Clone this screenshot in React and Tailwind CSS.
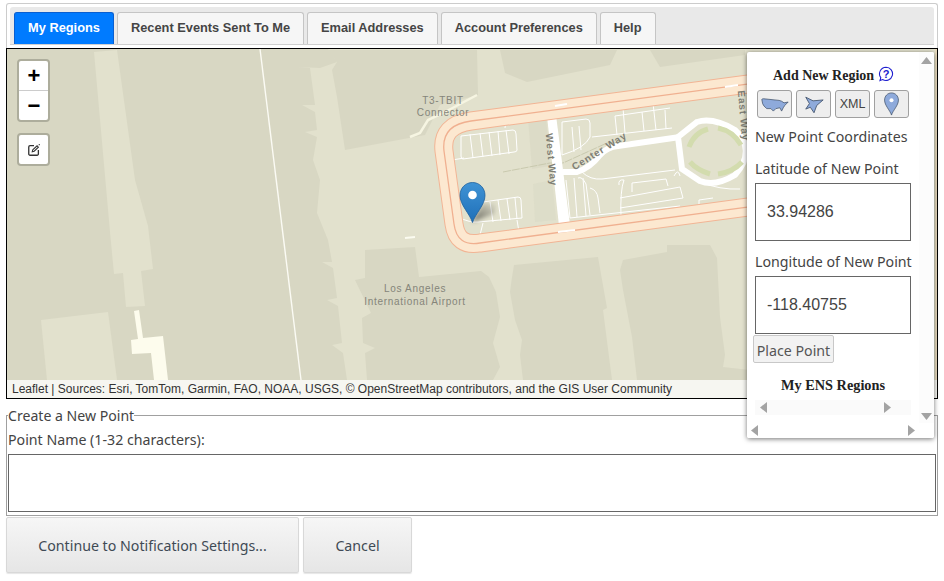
import React from "react";

const DARK = "#d8d7c3";
const LIGHT = "#e2e1cd";

const darkBlocks = [
  "7,49 328,49 337,62 320,68 298,67 310,68 315,105 302,105 315,112 317,130 305,132 317,137 313,160 320,180 317,213 328,240 332,262 322,262 333,268 337,298 327,300 338,306 342,343 332,345 343,353 347,380 7,380",
  "328,50 477,50 478,95 440,105 425,135 345,150 337,97 332,70 337,62",
  "500,50 617,50 610,65 527,82 505,73",
  "650,50 745,50 745,55 660,67",
  "365,250 415,247 419,277 481,271 489,277 496,292 500,317 493,343 500,367 493,380 367,380 365,353 375,348 363,343 362,318 371,313 355,280 365,278",
  "514,265 598,257 607,308 603,310 612,380 523,380 520,355 522,340 515,320 510,292 512,277",
  "623,260 667,252 667,245 710,245 717,258 720,317 723,340 725,355 723,367 750,370 750,380 637,380 632,337 623,290 620,270",
];

const lightBlocks = [
  "94,52 117,50 135,180 148,226 153,269 141,271 145,306 126,307 123,273 114,274 110,232",
  "41,320 108,312 117,380 47,380",
];

const whiteLines = [
  "M461 136 L513 130 Q516 130 516 134 L517 150 Q517 152 514 152 L463 159 Q461 159 461 156 Z",
  "M470 134 L473 158 M480 133 L483 157 M489 132 L492 156 M498 131 L500 155 M506 130 L509 154",
  "M452 160 L464 158 M505 128 L506 120 Q520 120 527 116",
  "M562 122 L586 119 Q590 119 590 123 L590 137 Q585 148 562 155 Z",
  "M572 127 L574 152 M579 126 L581 150",
  "M615 116 L670 108 M615 116 L617 135 M623 108 L625 133 M642 112 L644 131 M653 103 L656 130 M665 110 L666 129 M592 137 L672 128",
  "M566 180 L570 218 M578 178 Q582 176 586 184 L590 215 M590 188 Q597 190 598 198 L600 213 M574 178 L577 217 M583 178 L586 216",
  "M582 172 Q590 180 602 179 L675 170 M619 185 Q618 179 624 180 Q620 190 621 218 M620 198 L680 187 L683 198 L620 208 M632 192 L632 183 L666 179 L668 186 M680 176 Q678 168 674 176",
  "M570 218 L680 206 M700 182 Q720 190 740 189 M699 208 L699 200 L713 198",
  "M458 217 Q470 223 478 222 L522 218 M483 223 L480 235 M517 220 L519 232",
  "M483 202 L518 197 Q521 197 521 200 L522 218 M490 202 L493 222 M498 200 L501 221 M507 199 L510 220 M515 198 L517 219",
];

function Arrow({ dir }) {
  const pts = {
    up: "0,8 5.5,1 11,8",
    down: "0,1 5.5,8 11,1",
    left: "8,0 1,5.5 8,11",
    right: "1,0 8,5.5 1,11",
  }[dir];
  const v = dir === "up" || dir === "down" ? "0 0 11 9" : "0 0 9 11";
  const c = dir === "up" || dir === "down" ? "w-[11px] h-[9px]" : "w-[9px] h-[11px]";
  return (
    <svg viewBox={v} className={c}>
      <polygon points={pts} fill="#a3a3a3" />
    </svg>
  );
}

const RING = "M770 81 L471 121 Q441 125 444 151 L454 224 Q457 247 480 243 L770 204";

function MapArt() {
  return (
    <svg viewBox="7 49 930 349" className="block w-[930px] h-[349px]">
      <defs>
        <linearGradient id="pinGrad" x1="0" y1="0" x2="0" y2="1">
          <stop offset="0" stopColor="#3f93d5" />
          <stop offset="1" stopColor="#1f6fb8" />
        </linearGradient>
        <linearGradient id="shadowGrad" x1="0" y1="1" x2="1" y2="0">
          <stop offset="0" stopColor="#000" stopOpacity="0.55" />
          <stop offset="1" stopColor="#000" stopOpacity="0" />
        </linearGradient>
        <filter id="blurShadow" x="-30%" y="-30%" width="160%" height="160%">
          <feGaussianBlur stdDeviation="2" />
        </filter>
      </defs>
      <rect x="7" y="49" width="930" height="349" fill={LIGHT} />
      {darkBlocks.map((p, i) => (
        <polygon key={i} points={p} fill={DARK} />
      ))}
      {lightBlocks.map((p, i) => (
        <polygon key={i} points={p} fill={LIGHT} />
      ))}
      <line x1="260" y1="49" x2="301" y2="380" stroke="#fbfbf4" strokeWidth="1.4" />
      <polygon points="134,311 139,310 143,338 163,336 168,380 154,380 151,353 132,354 131,340 138,339" fill="#fdfced" />
      <path d="M410 137 L420 133 L428 120 L445 112 L477 95" fill="none" stroke="#f6f5e2" strokeWidth="2.5" />
      <path d="M405 238 L415 237" stroke="#fbfbf0" strokeWidth="2" />

      <polygon points="528,118 546,116 550,166 532,169" fill={DARK} opacity="0.6" />
      <polygon points="533,184 552,180 556,220 535,222" fill={DARK} opacity="0.4" />

      <path d="M503 172 L550 163 L563 163 L607 143 L673 140" fill="none" stroke="#c9c9ae" strokeWidth="1" strokeDasharray="8 1" />

      <g fill="none" stroke="#ffffff" strokeWidth="1">
        {whiteLines.map((d, i) => (
          <path key={i} d={d} />
        ))}
      </g>

      <polygon points="547,116 556,115 570,225 559,226" fill="#fff" />
      <path d="M563 172 L577 172 Q590 168 600 155 Q607 147 618 146 L680 137" fill="none" stroke="#fff" strokeWidth="6" />
      <path d="M678 137 L697 122 Q713 117 735 130 Q757 150 735 175 Q715 187 700 181 L682 169 Z" fill="none" stroke="#fff" strokeWidth="6" />
      <path d="M689 147 Q694 133 708 129 M718 128 Q733 131 741 145" fill="none" stroke="#d3dcae" strokeWidth="5" />
      <path d="M690 162 Q697 170 710 174 M718 174 Q733 172 742 162" fill="none" stroke="#d3dcae" strokeWidth="5" />

      <g fill="none" strokeLinejoin="round">
        <path d={RING} stroke="#f2b494" strokeWidth="19" />
        <path d={RING} stroke="#fce8d0" strokeWidth="17" />
        <path d={RING} stroke="#f0b090" strokeWidth="1.3" />
      </g>
      <path d="M555 106 L567 104 M558 232 L575 230 M725 87 L738 85" stroke="#fff" strokeWidth="2" />

      <polygon points="935,49 938,49 938,398 935,398" fill="#eadcbe" />

      <g fontFamily="'Liberation Sans', sans-serif" fontSize="10" fill="#85857a" letterSpacing="0.7" textAnchor="middle">
        <text x="443" y="104">T3-TBIT</text>
        <text x="443" y="116">Connector</text>
        <text x="415" y="292">Los Angeles</text>
        <text x="415" y="305">International Airport</text>
      </g>
      <g fontFamily="'Liberation Sans', sans-serif" fontSize="10" fontWeight="700" fill="#7f7f75" letterSpacing="0.8" textAnchor="middle">
        <text transform="translate(548 160) rotate(85)">West Way</text>
        <text transform="translate(601 154) rotate(-32)">Center Way</text>
        <text transform="translate(740 116) rotate(85)">East Way</text>
      </g>

      <polygon points="472,222 483,203 497,203 494,214" fill="url(#shadowGrad)" filter="url(#blurShadow)" />
      <path
        d="M472.5 222.5 C470 214 460 205 460 195.5 C460 188 465.5 182.5 472.5 182.5 C479.5 182.5 485 188 485 195.5 C485 205 475 214 472.5 222.5 Z"
        fill="url(#pinGrad)"
        stroke="#1c5f9e"
        strokeWidth="0.8"
      />
      <circle cx="472.5" cy="195" r="4.3" fill="#fff" />
    </svg>
  );
}

const iconBtn =
  "w-[35px] h-[28px] flex items-center justify-center rounded-[3px] border border-[#a0a0a0] bg-[#eeeeee]";

function Panel() {
  return (
    <div className="absolute left-[740px] top-[3px] z-10 w-[187px] h-[386px] bg-white shadow-[0_1px_5px_rgba(0,0,0,0.55)] rounded-[2px] overflow-hidden">
      <div className="absolute right-0 top-0 bottom-[15px] w-[15px] bg-[#fcfcfc] flex flex-col items-center justify-between pt-1 pb-[2px]">
        <Arrow dir="up" />
        <Arrow dir="down" />
      </div>
      <div className="absolute left-0 right-0 bottom-0 h-[15px] bg-white flex items-center justify-between pl-[3px] pr-[18px]">
        <Arrow dir="left" />
        <Arrow dir="right" />
      </div>

      <div className="pl-2 w-[172px]">
        <div className="flex items-center justify-start gap-[4px] pt-[9px] h-[38px] pl-[18px] text-[14px] font-bold font-['Liberation_Serif',serif] text-[#222]">
          <span>Add New Region</span>
          <svg viewBox="0 0 16 16" className="w-[16px] h-[16px] -mt-[4px]">
            <path d="M8 1.2a6.6 6.6 0 1 1-3.4 12.3L2 14.5l.8-2.8A6.6 6.6 0 0 1 8 1.2Z" fill="none" stroke="#2020d0" strokeWidth="1.1" />
            <text x="8" y="11.8" textAnchor="middle" fontSize="11" fontFamily="'Liberation Sans', sans-serif" fill="#2020d0">?</text>
          </svg>
        </div>
        <div className="flex gap-[4px] pl-[2px]">
          <div className={iconBtn}>
            <svg viewBox="0 0 34 20" className="w-[28px] h-[17px]">
              <path d="M1 4 Q1 3 3 3 L22 5 L25 6 L28 8 L33 7 L29 11 L27 14 L25 18 L23 14 L18 15 L15 18 L12 15 L7 15 Q3 12 2 9 Z" fill="#8eaadb" stroke="#3f5069" strokeWidth="0.9" strokeLinejoin="round" />
            </svg>
          </div>
          <div className={iconBtn}>
            <svg viewBox="0 0 24 20" className="w-[22px] h-[19px]">
              <path d="M3 2 L11 6 L22 5 L15 11 L12 19 L8 13 L3 15 L7 9 Z" fill="#8eaadb" stroke="#3f5069" strokeWidth="0.9" strokeLinejoin="round" />
            </svg>
          </div>
          <div className={`${iconBtn} text-[12.5px] font-['Liberation_Sans',sans-serif] text-[#444]`}>XML</div>
          <div className={iconBtn}>
            <svg viewBox="0 0 18 26" className="w-[17px] h-[24px]">
              <path d="M9 25 C7.5 20 1.5 14.5 1.5 8.8 C1.5 4.4 4.8 1 9 1 C13.2 1 16.5 4.4 16.5 8.8 C16.5 14.5 10.5 20 9 25 Z" fill="#8eaadb" stroke="#3f5069" strokeWidth="0.8" />
              <circle cx="9" cy="9" r="2.2" fill="#fff" />
            </svg>
          </div>
        </div>

        <div className="mt-[8px] h-[22px] leading-[22px] text-[14.2px] text-[#444]">New Point Coordinates</div>
        <div className="mt-[10px] h-[22px] leading-[22px] text-[14.2px] text-[#444]">Latitude of New Point</div>
        <div className="mt-[3px] w-[156px] h-[58px] border border-[#666] flex items-center pl-[11px] text-[16px] font-['Liberation_Sans',sans-serif] text-[#444]">33.94286</div>
        <div className="mt-[10px] h-[22px] leading-[22px] text-[14.2px] text-[#444] whitespace-nowrap">Longitude of New Point</div>
        <div className="mt-[3px] w-[156px] h-[58px] border border-[#666] flex items-center pl-[11px] text-[16px] font-['Liberation_Sans',sans-serif] text-[#444]">-118.40755</div>
        <div className="-ml-[2px] mt-[1px] w-[81px] h-[28px] pt-[3px] border border-[#c8c8c8] bg-[#f2f2f2] rounded-[2px] flex items-center justify-center text-[14.2px] text-[#555]">Place Point</div>
        <div className="mt-[13px] w-[156px] text-center text-[14.3px] leading-[18px] font-bold font-['Liberation_Serif',serif] text-[#222]">My ENS Regions</div>
        <div className="mt-[6px] w-[156px] h-[15px] bg-[#fafafa] flex items-center justify-between pl-[4px] pr-[19px]">
          <Arrow dir="left" />
          <Arrow dir="right" />
        </div>
      </div>
    </div>
  );
}

const tabs = ["Recent Events Sent To Me", "Email Addresses", "Account Preferences", "Help"];

export default function App() {
  return (
    <div className="w-[944px] h-[581px] bg-white font-['Noto_Sans',sans-serif] overflow-hidden pt-[3px] pl-[6px]">
      <div className="w-[932px] h-[45px] border border-[#cccccc] border-b-0 rounded-t-[3px] pt-[3px] pl-[3px] pr-[3px]">
        <div className="h-[38px] bg-[#e9e9e9] border-b border-[#d0d0d0] rounded-t-[3px] pt-[5px] pl-[4px] flex gap-[3px]">
          <div className="w-[100px] h-[32px] pb-[2px] bg-[#007bff] border border-[#0a5fd0] border-b-0 rounded-t-[3px] flex items-center justify-center text-[12.8px] font-bold font-['Liberation_Sans',sans-serif] text-white">
            My Regions
          </div>
          {tabs.map((t) => (
            <div
              key={t}
              className="h-[32px] pb-[2px] px-[13px] bg-[#f6f6f6] border border-[#c5c5c5] border-b-0 rounded-t-[3px] flex items-center text-[12.8px] font-bold font-['Liberation_Sans',sans-serif] text-[#454545]"
            >
              {t}
            </div>
          ))}
        </div>
      </div>

      <div className="relative w-[932px] h-[351px] border border-black">
        <MapArt />
        <div className="absolute left-0 right-0 bottom-0 h-[18px] bg-[#f6f6f1] pl-[5px] pb-[1px] flex items-center text-[12px] font-['Liberation_Sans',sans-serif] text-[#333]">
          Leaflet | Sources: Esri, TomTom, Garmin, FAO, NOAA, USGS, © OpenStreetMap contributors, and the GIS User Community
        </div>
        <div className="absolute left-[10px] top-[10px] w-[33px] h-[63px] border-2 border-[#adad9c] rounded-[4px] bg-white flex flex-col font-['Liberation_Sans',sans-serif] font-bold text-black">
          <div className="h-[30px] pl-px border-b border-[#cccccc] flex items-center justify-center text-[22px] leading-none">+</div>
          <div className="h-[29px] pl-px flex items-center justify-center text-[22px] leading-none">−</div>
        </div>
        <div className="absolute left-[10px] top-[84px] w-[33px] h-[33px] pl-px border-2 border-[#adad9c] rounded-[4px] bg-white flex items-center justify-center">
          <svg viewBox="0 0 16 16" className="w-[14px] h-[14px]" fill="none" stroke="#333" strokeWidth="1.5">
            <path d="M8 3 H3.5 A1.5 1.5 0 0 0 2 4.5 V12.5 A1.5 1.5 0 0 0 3.5 14 H11.5 A1.5 1.5 0 0 0 13 12.5 V8" />
            <path d="M6 10 L6.6 7.8 L11.5 3.2 L13 4.8 L8.2 9.4 Z" strokeWidth="1.2" />
            <path d="M14 1 V2.5" strokeWidth="1.2" />
          </svg>
        </div>
        <Panel />
      </div>

      <fieldset className="mt-[6px] w-[931px] h-[111px] border border-[#a0a0a0] px-[1px]">
        <legend className="pt-[2px] text-[14.1px] leading-[18px] text-[#444]">Create a New Point</legend>
        <div className="h-[22px] pt-[5px] leading-[20px] text-[14.2px] text-[#444] whitespace-nowrap">Point Name (1-32 characters):</div>
        <div className="mt-[7px] w-[928px] h-[58px] border border-[#666] bg-white" />
      </fieldset>

      <div className="mt-[1px] flex gap-[4px] text-[14.2px] text-[#3f4a55]">
        <div className="w-[293px] h-[56px] pt-[2px] border border-[#d8d8d8] rounded-[2px] bg-gradient-to-b from-[#f6f6f6] to-[#e6e6e6] flex items-center justify-center shadow-[0_1px_1px_rgba(0,0,0,0.1)]">
          Continue to Notification Settings...
        </div>
        <div className="w-[109px] h-[56px] pt-[2px] border border-[#d8d8d8] rounded-[2px] bg-gradient-to-b from-[#f6f6f6] to-[#e6e6e6] flex items-center justify-center shadow-[0_1px_1px_rgba(0,0,0,0.1)]">
          Cancel
        </div>
      </div>
    </div>
  );
}
